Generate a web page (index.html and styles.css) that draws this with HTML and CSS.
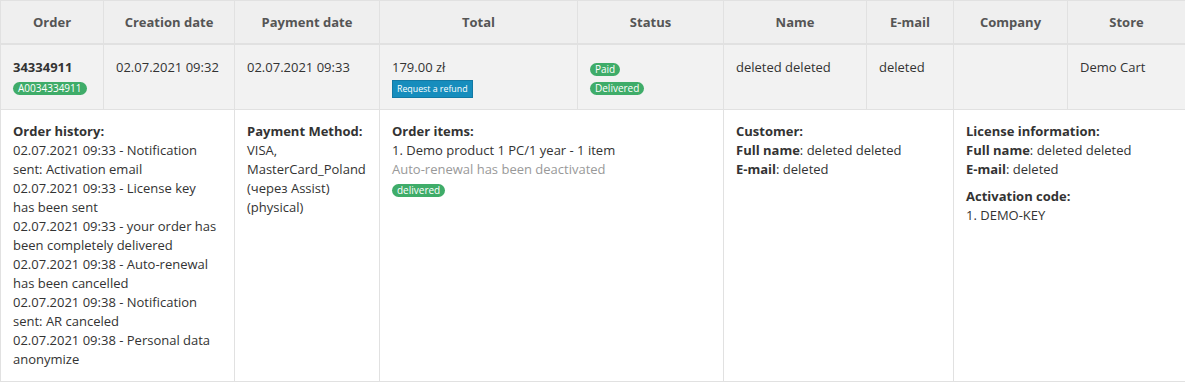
FILE: index.html
```html
<!DOCTYPE html>
<html lang="en">
<head>
<meta charset="utf-8">
<title>Orders</title>
<link rel="stylesheet" href="styles.css">
</head>
<body>
<table class="orders">
  <colgroup>
    <col class="c-order">
    <col class="c-created">
    <col class="c-paid">
    <col class="c-total">
    <col class="c-status">
    <col class="c-name">
    <col class="c-email">
    <col class="c-company">
    <col class="c-store">
  </colgroup>
  <thead>
    <tr>
      <th>Order</th>
      <th>Creation date</th>
      <th>Payment date</th>
      <th>Total</th>
      <th>Status</th>
      <th>Name</th>
      <th>E-mail</th>
      <th>Company</th>
      <th>Store</th>
    </tr>
  </thead>
  <tbody>
    <tr class="summary">
      <td>
        <div class="order-id">34334911</div>
        <div class="stack"><span class="badge">A0034334911</span></div>
      </td>
      <td>02.07.2021 09:32</td>
      <td>02.07.2021 09:33</td>
      <td>
        <div>179.00 zł</div>
        <div class="refund-wrap"><span class="refund">Request a refund</span></div>
      </td>
      <td>
        <div class="stack"><span class="badge">Paid</span></div>
        <div class="stack"><span class="badge">Delivered</span></div>
      </td>
      <td>deleted deleted</td>
      <td>deleted</td>
      <td></td>
      <td>Demo Cart</td>
    </tr>
    <tr class="details">
      <td colspan="2" class="history">
        <div class="label">Order history:</div>
        <div>02.07.2021 09:33 - Notification sent: Activation email</div>
        <div>02.07.2021 09:33 - License key has been sent</div>
        <div>02.07.2021 09:33 - your order has been completely delivered</div>
        <div>02.07.2021 09:38 - Auto-renewal has been cancelled</div>
        <div>02.07.2021 09:38 - Notification sent: AR canceled</div>
        <div>02.07.2021 09:38 - Personal data anonymize</div>
      </td>
      <td>
        <div class="label">Payment Method:</div>
        <div>VISA, MasterCard_Poland (через Assist) (physical)</div>
      </td>
      <td colspan="2">
        <div class="label">Order items:</div>
        <div>1. Demo product 1 PC/1 year - 1 item</div>
        <div class="muted">Auto-renewal has been deactivated</div>
        <div class="stack"><span class="badge">delivered</span></div>
      </td>
      <td colspan="2">
        <div class="label">Customer:</div>
        <div><b>Full name</b>: deleted deleted</div>
        <div><b>E-mail</b>: deleted</div>
      </td>
      <td colspan="2">
        <div class="label">License information:</div>
        <div><b>Full name</b>: deleted deleted</div>
        <div><b>E-mail</b>: deleted</div>
        <div class="label section">Activation code:</div>
        <div>1. DEMO-KEY</div>
      </td>
    </tr>
  </tbody>
</table>
</body>
</html>
```

FILE: styles.css
```css
html, body {
  margin: 0;
  padding: 0;
  background: #ffffff;
}

body {
  font-family: "Open Sans", "Liberation Sans", sans-serif;
  font-size: 13px;
  line-height: 19px;
  color: #333333;
}

.orders {
  width: 1185px;
  border-collapse: collapse;
  table-layout: fixed;
}

.c-order { width: 103px; }
.c-created { width: 131px; }
.c-paid { width: 145px; }
.c-total { width: 198px; }
.c-status { width: 146px; }
.c-name { width: 143px; }
.c-email { width: 87px; }
.c-company { width: 114px; }
.c-store { width: 118px; }

.orders th,
.orders td {
  border: 1px solid #e1e1e1;
  padding: 12px 12px;
  vertical-align: top;
  text-align: left;
}

.orders th {
  background: #efefef;
  color: #555555;
  font-size: 13px;
  font-weight: 700;
  text-align: center;
  padding: 12px 12px 11px;
  border-bottom: 2px solid #e1e1e1;
}

.orders .summary td {
  background: #f2f2f2;
  padding: 13px 12px 11px;
}

.details td {
  background: #ffffff;
}

.orders td.history {
  padding-right: 15px;
}

.order-id {
  font-weight: 700;
}

.stack {
  box-sizing: border-box;
  height: 19px;
  padding-top: 3px;
  display: flex;
  align-items: center;
}

.badge {
  display: inline-block;
  background: #3fac69;
  color: #ffffff;
  font-size: 10px;
  line-height: 13px;
  height: 13px;
  padding: 0 5px;
  border-radius: 7px;
}

.refund-wrap {
  margin-top: 1px;
}

.refund {
  display: inline-block;
  background: #168dbd;
  border: 1px solid #1279a4;
  color: #ffffff;
  font-size: 8.8px;
  line-height: 16px;
  height: 16px;
  padding: 0 4px;
}

.label {
  font-weight: 700;
}

.section {
  margin-top: 8px;
}

.muted {
  color: #999999;
}

b {
  font-weight: 700;
}
```
